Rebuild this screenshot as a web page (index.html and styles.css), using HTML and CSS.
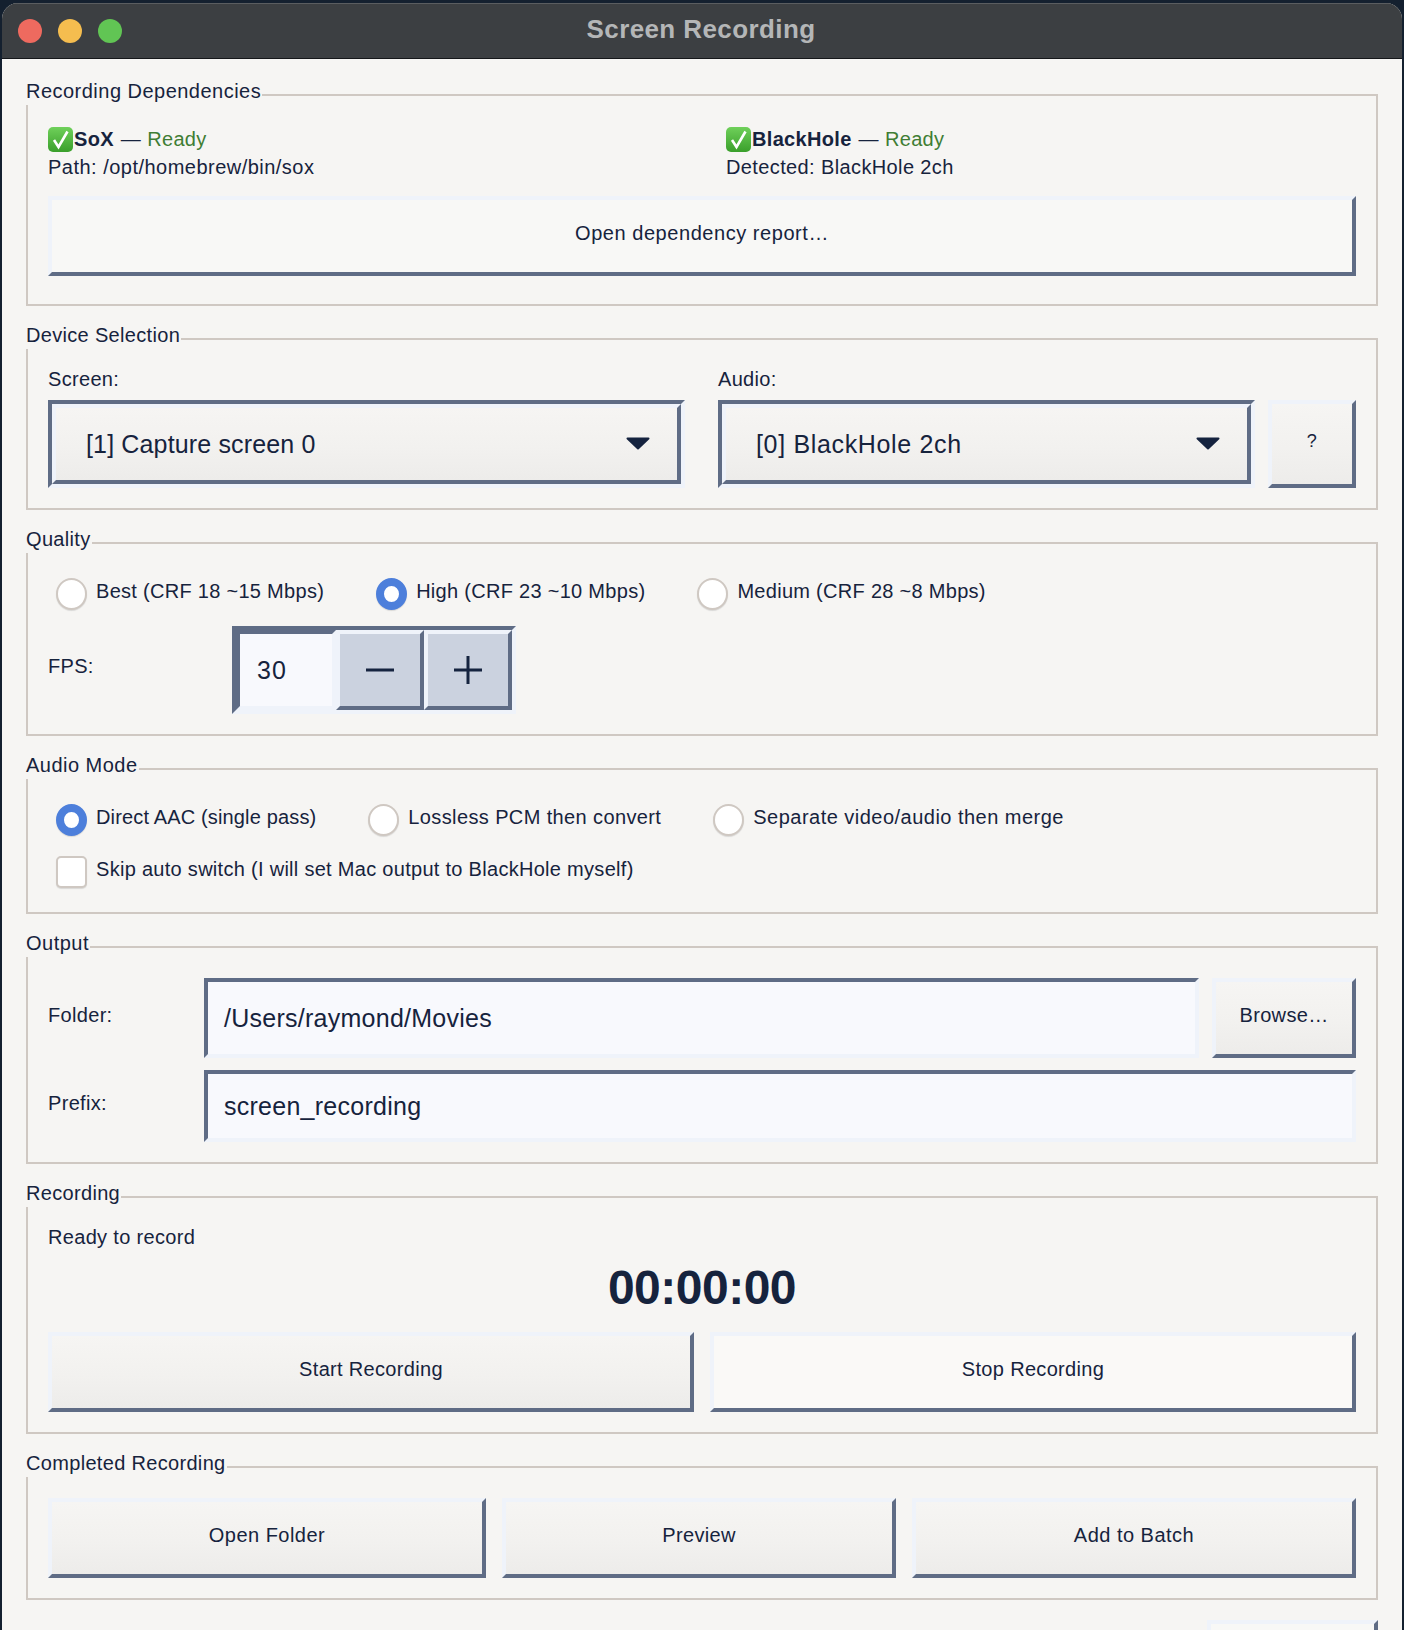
FILE: index.html
```html
<!DOCTYPE html>
<html lang="en">
<head>
<meta charset="utf-8">
<title>Screen Recording</title>
<link rel="stylesheet" href="styles.css">
</head>
<body>
<div class="window">
  <header class="titlebar">
    <div class="lights">
      <span class="light red"></span>
      <span class="light yellow"></span>
      <span class="light green"></span>
    </div>
    <div class="window-title">Screen Recording</div>
  </header>
  <main class="content">
    <section class="group deps">
      <div class="group-title wide">Recording Dependencies</div>
      <div class="status-grid">
        <div class="status">
          <div class="status-line">
            <svg class="check" viewBox="0 0 25 25"><defs><linearGradient id="g1" x1="0" y1="0" x2="0" y2="1"><stop offset="0" stop-color="#6fd05a"/><stop offset="1" stop-color="#3a9f2b"/></linearGradient></defs><rect width="25" height="25" rx="5" fill="url(#g1)"/><path d="M6 13l4.500 7L19.500 4.500" fill="none" stroke="#fff" stroke-width="2.600"/></svg><b>SoX</b><span class="dash">—</span><span class="ready">Ready</span>
          </div>
          <div class="status-detail wide">Path: /opt/homebrew/bin/sox</div>
        </div>
        <div class="status">
          <div class="status-line">
            <svg class="check" viewBox="0 0 25 25"><rect width="25" height="25" rx="5" fill="url(#g1)"/><path d="M6 13l4.500 7L19.500 4.500" fill="none" stroke="#fff" stroke-width="2.600"/></svg><b>BlackHole</b><span class="dash">—</span><span class="ready">Ready</span>
          </div>
          <div class="status-detail mid">Detected: BlackHole 2ch</div>
        </div>
      </div>
      <button class="btn flat report">Open dependency report…</button>
    </section>

    <section class="group device">
      <div class="group-title">Device Selection</div>
      <div class="device-grid">
        <div class="device-col">
          <div class="field-label">Screen:</div>
          <div class="combo"><div class="combo-inner"><span>[1] Capture screen 0</span><svg class="arrow" viewBox="0 0 24 13"><path d="M1.500 1.500h21L12 11.500z" fill="#15233f" stroke="#15233f" stroke-width="2" stroke-linejoin="round"/></svg></div></div>
        </div>
        <div class="device-col">
          <div class="field-label">Audio:</div>
          <div class="combo-row">
            <div class="combo"><div class="combo-inner"><span class="wider">[0] BlackHole 2ch</span><svg class="arrow" viewBox="0 0 24 13"><path d="M1.500 1.500h21L12 11.500z" fill="#15233f" stroke="#15233f" stroke-width="2" stroke-linejoin="round"/></svg></div></div>
            <button class="btn help">?</button>
          </div>
        </div>
      </div>
    </section>

    <section class="group quality">
      <div class="group-title">Quality</div>
      <div class="radio-row quality-row">
        <label class="radio-item"><span class="radio"></span>Best (CRF 18 ~15 Mbps)</label>
        <label class="radio-item"><span class="radio on"></span>High (CRF 23 ~10 Mbps)</label>
        <label class="radio-item"><span class="radio"></span>Medium (CRF 28 ~8 Mbps)</label>
      </div>
      <div class="fps-row">
        <div class="fps-label">FPS:</div>
        <div class="spin">
          <div class="spin-value">30</div>
          <div class="spin-btn"><svg viewBox="0 0 30 30" class="spin-icon"><path d="M1 15h28" stroke="#15233f" stroke-width="3"/></svg></div>
          <div class="spin-btn"><svg viewBox="0 0 30 30" class="spin-icon"><path d="M1 15h28M15 1v28" stroke="#15233f" stroke-width="3"/></svg></div>
        </div>
      </div>
    </section>

    <section class="group audio-mode">
      <div class="group-title wide">Audio Mode</div>
      <div class="radio-row">
        <label class="radio-item tight"><span class="radio on"></span>Direct AAC (single pass)</label>
        <label class="radio-item mid"><span class="radio"></span>Lossless PCM then convert</label>
        <label class="radio-item wide"><span class="radio"></span>Separate video/audio then merge</label>
      </div>
      <label class="radio-item skip"><span class="checkbox"></span>Skip auto switch (I will set Mac output to BlackHole myself)</label>
    </section>

    <section class="group output">
      <div class="group-title wide">Output</div>
      <div class="output-grid">
        <div class="output-label">Folder:</div>
        <div class="folder-row">
          <div class="text-input">/Users/raymond/Movies</div>
          <button class="btn browse">Browse…</button>
        </div>
        <div class="output-label">Prefix:</div>
        <div class="text-input prefix">screen_recording</div>
      </div>
    </section>

    <section class="group recording">
      <div class="group-title">Recording</div>
      <div class="rec-status">Ready to record</div>
      <div class="timer">00:00:00</div>
      <div class="two-btns">
        <button class="btn">Start Recording</button>
        <button class="btn flat stop">Stop Recording</button>
      </div>
    </section>

    <section class="group completed">
      <div class="group-title">Completed Recording</div>
      <div class="three-btns">
        <button class="btn wide">Open Folder</button>
        <button class="btn">Preview</button>
        <button class="btn wide">Add to Batch</button>
      </div>
    </section>

    <div class="footer-row"><div class="btn flat footer-btn"></div></div>
  </main>
</div>
</body>
</html>
```
FILE: styles.css
```css
* { box-sizing: border-box; }
html, body { margin: 0; height: 100%; }
body {
  background: #14202f;
  color: #16233d;
  font-family: "Liberation Sans", Arial, sans-serif;
  font-size: 20px;
  letter-spacing: .32px;
  overflow: hidden;
}
.window {
  margin: 3px 2px 0;
  height: 1627px;
  background: #f6f5f3;
  border-radius: 16px 16px 0 0;
  overflow: hidden;
}
.titlebar {
  height: 56px;
  background: #3c3f42;
  border-bottom: 1px solid #15171a;
  box-shadow: inset 0 1px 0 #5a5d60;
  display: flex;
  align-items: center;
  position: relative;
}
.lights { display: flex; gap: 16px; margin-left: 16px; }
.light { width: 24px; height: 24px; border-radius: 50%; }
.red { background: #ee6a5f; }
.yellow { background: #f5bd4f; }
.green { background: #61c554; }
.window-title {
  position: absolute;
  left: 0;
  right: 0;
  top: 0;
  height: 55px;
  line-height: 52px;
  padding-right: 2px;
  text-align: center;
  font-size: 26px;
  font-weight: 700;
  letter-spacing: .4px;
  color: #b4b6b7;
}
.content { padding: 35px 24px 0; }
.group {
  position: relative;
  border: 2px solid #cfc8c2;
  padding: 0 20px;
  margin-bottom: 32px;
}
.group-title {
  position: absolute;
  left: -2px;
  top: -17px;
  height: 26px;
  line-height: 24px;
  padding-right: 1px;
  background: #f6f5f3;
}
.btn {
  display: block;
  border: 4px solid;
  border-color: #eff3fa #5f6c85 #5f6c85 #eff3fa;
  background: linear-gradient(#f6f5f3, #f2f1ef 55%, #edecea);
  color: inherit;
  font: inherit;
  letter-spacing: .32px;
  padding: 0 0 6px;
  margin: 0;
  height: 80px;
  width: 100%;
  border-radius: 0;
}
.flat { background: #f8f8f6; }
.stop { background: #faf9f7; }
.wide, .btn.wide { letter-spacing: .48px; }
.mid { letter-spacing: .38px; }
.wider { letter-spacing: .66px; }
.tight { letter-spacing: .15px; }

.deps { height: 212px; padding-top: 29px; }
.status-grid { display: grid; grid-template-columns: 1fr 1fr; column-gap: 48px; }
.status-line, .status-detail { height: 28px; line-height: 28px; }
.status-line { display: flex; align-items: center; }
.check { width: 25px; height: 25px; flex: none; margin-right: 1px; }
.dash { margin: 0 6px 0 7px; }
.ready { color: #3f7d34; }
.btn.report { margin-top: 15px; letter-spacing: .55px; }

.device { height: 172px; padding-top: 27px; }
.device-grid { display: grid; grid-template-columns: 637px 1fr; column-gap: 33px; }
.field-label { height: 24px; line-height: 24px; margin-bottom: 9px; }
.combo-row { display: flex; gap: 13px; }
.combo-row .combo { flex: 1; }
.combo {
  height: 88px;
  border: 4px solid;
  border-color: #5f6c85 #eff3fa #eff3fa #5f6c85;
}
.combo-inner {
  height: 100%;
  border: 4px solid;
  border-color: #eff3fa #5f6c85 #5f6c85 #eff3fa;
  background: linear-gradient(#f6f5f3, #f2f1ef 55%, #edecea);
  display: flex;
  align-items: center;
  justify-content: space-between;
  padding: 0 27px 0 30px;
  font-size: 25px;
  letter-spacing: .15px;
}
.arrow { width: 24px; height: 13px; flex: none; margin-bottom: 2px; }
.help { width: 88px; flex: none; height: 88px; padding-bottom: 6px; font-size: 18px; }

.quality { height: 194px; padding-top: 34px; }
.radio-row { display: flex; gap: 52px; padding-left: 8px; }
.quality-row { letter-spacing: .29px; }
.radio-item { display: flex; align-items: flex-start; gap: 9px; line-height: 26px; height: 32px; }
.radio {
  width: 31px;
  height: 32px;
  border-radius: 50%;
  border: 2px solid #cfc8c2;
  background: #fff;
  box-shadow: 0 1px 1px rgba(0, 0, 0, .12);
  flex: none;
}
.radio.on { border: 8px solid #4d7fdb; }
.fps-row { display: flex; margin-top: 16px; }
.fps-label { width: 184px; padding-top: 27px; line-height: 26px; }
.spin {
  width: 284px;
  height: 88px;
  display: flex;
  border: 4px solid;
  border-color: #5f6c85 #eff3fa #eff3fa #5f6c85;
}
.spin-value {
  width: 100px;
  border: 4px solid;
  border-color: #5f6c85 #eff3fa #eff3fa #5f6c85;
  background: #f8f9fd;
  font-size: 25px;
  letter-spacing: 1px;
  line-height: 72px;
  padding-left: 17px;
}
.spin-btn {
  width: 88px;
  border: 4px solid;
  border-color: #eff3fa #5f6c85 #5f6c85 #eff3fa;
  background: #cbd2df;
  display: flex;
  align-items: center;
  justify-content: center;
}
.spin-icon { width: 30px; height: 30px; }

.audio-mode { height: 146px; padding-top: 34px; }
.skip { margin: 20px 0 0 8px; letter-spacing: .29px; }
.checkbox {
  width: 31px;
  height: 32px;
  border-radius: 5px;
  border: 2px solid #cfc8c2;
  background: #fff;
  box-shadow: 0 1px 1px rgba(0, 0, 0, .12);
  flex: none;
}

.output { height: 218px; padding-top: 30px; }
.output-grid { display: grid; grid-template-columns: 156px 1fr; row-gap: 12px; }
.output-label { align-self: center; padding-bottom: 6px; }
.folder-row { display: flex; gap: 13px; }
.text-input {
  flex: 1;
  height: 80px;
  border: 4px solid;
  border-color: #5f6c85 #eff3fa #eff3fa #5f6c85;
  background: #f8f9fd;
  font-size: 25px;
  letter-spacing: .26px;
  display: flex;
  align-items: center;
  padding-left: 16px;
}
.text-input.prefix { height: 72px; }
.browse { width: 144px; flex: none; }

.recording { height: 238px; padding-top: 27px; }
.rec-status { height: 24px; line-height: 24px; }
.timer {
  text-align: center;
  font-size: 48px;
  font-weight: 700;
  letter-spacing: -.5px;
  height: 60px;
  line-height: 60px;
  margin-top: 9px;
  margin-bottom: 14px;
}
.two-btns { display: grid; grid-template-columns: 1fr 1fr; column-gap: 16px; }

.completed { height: 134px; padding-top: 30px; }
.three-btns { display: grid; grid-template-columns: 438px 394px 1fr; column-gap: 16px; }

.footer-row { display: flex; justify-content: flex-end; margin-top: -12px; }
.footer-btn { width: 171px; }
```
